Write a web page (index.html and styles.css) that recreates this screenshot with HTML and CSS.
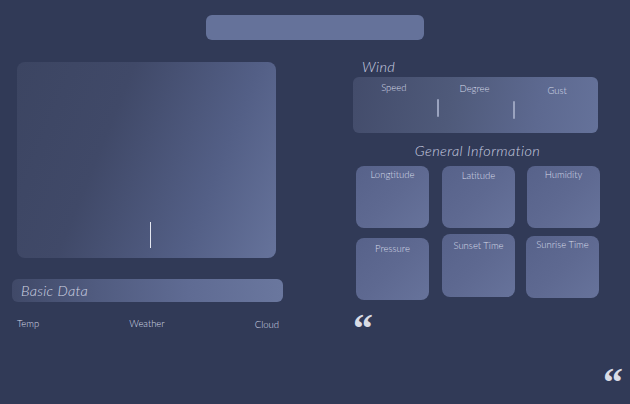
FILE: index.html
```html
<!DOCTYPE html>
<html>
<head>
<meta charset="utf-8">
<link rel="stylesheet" href="styles.css">
</head>
<body>
<div class="top-bar"></div>
<div class="main">
  <div class="left">
    <div class="map-card"><span class="caret"></span></div>
    <div class="basic-bar">Basic Data</div>
    <div class="basic-row">
      <span>Temp</span>
      <span>Weather</span>
      <span>Cloud</span>
    </div>
  </div>
  <div class="right">
    <div class="section-title wind-title">Wind</div>
    <div class="wind-card">
      <div class="wind-col"><span class="lbl l-speed">Speed</span></div>
      <span class="sep sep1"></span>
      <div class="wind-col"><span class="lbl l-degree">Degree</span></div>
      <span class="sep sep2"></span>
      <div class="wind-col"><span class="lbl l-gust">Gust</span></div>
    </div>
    <div class="section-title gen-title">General Information</div>
    <div class="grid">
      <div class="tile t1">Longtitude</div>
      <div class="tile t2">Latitude</div>
      <div class="tile t3">Humidity</div>
      <div class="tile t4">Pressure</div>
      <div class="tile t5">Sunset Time</div>
      <div class="tile t6">Sunrise Time</div>
    </div>
    <div class="quote q1">&ldquo;</div>
    <div class="quote q2">&ldquo;</div>
  </div>
</div>
</body>
</html>
```

FILE: styles.css
```css
* { box-sizing: border-box; }
html, body {
  margin: 0;
  padding: 0;
}
body {
  width: 630px;
  height: 404px;
  overflow: hidden;
  background: #313a57;
  font-family: Lato, "Open Sans", sans-serif;
  font-weight: 300;
  color: #d6dae8;
}
.top-bar {
  width: 218px;
  height: 25px;
  margin: 15px auto 0;
  background: #65729a;
  border-radius: 6px;
}
.main {
  display: flex;
  padding-left: 12px;
}
.left {
  width: 271px;
  display: flex;
  flex-direction: column;
}
.map-card {
  margin: 22px 0 0 5px;
  width: 259px;
  height: 196px;
  border-radius: 8px;
  background: linear-gradient(112deg, #3c4562 0%, #404968 35%, #535f86 72%, #66739b 100%);
  display: flex;
  justify-content: center;
  align-items: flex-end;
  padding-bottom: 10px;
  padding-left: 8px;
}
.caret {
  display: block;
  width: 1px;
  height: 26px;
  background: #e4e7f0;
}
.basic-bar {
  margin-top: 21px;
  height: 23px;
  border-radius: 6px;
  background: linear-gradient(90deg, #404968 0%, #505b7f 30%, #5f6b93 65%, #6a779e 100%);
  font-style: italic;
  font-size: 14.5px;
  line-height: 23px;
  padding-left: 9px;
  color: #cfd3e3;
  letter-spacing: 0.3px;
}
.basic-row {
  display: flex;
  justify-content: space-between;
  padding: 16px 4px 0 5px;
  font-size: 9.5px;
  color: #d6dae8;
}
.basic-row span:nth-child(3) { margin-top: 1px; }
.right {
  margin-left: 70px;
  width: 248px;
  display: flex;
  flex-direction: column;
}
.section-title {
  font-style: italic;
  font-size: 14.5px;
  letter-spacing: 0.4px;
  color: #c9cee0;
}
.wind-title {
  margin-top: 18px;
  padding-left: 9px;
  line-height: 17px;
}
.wind-card {
  margin-top: 2px;
  width: 245px;
  height: 56px;
  border-radius: 6px;
  background: linear-gradient(100deg, #434c6b 0%, #4f5a7a 40%, #5d6990 75%, #65729a 100%);
  display: flex;
  position: relative;
}
.wind-col {
  flex: 1;
  font-size: 9.5px;
  text-align: center;
  color: #d6dae8;
}
.lbl { display: block; }
.l-speed { margin-top: 5px; }
.l-degree { margin-top: 6px; margin-right: 2px; }
.l-gust { margin-top: 8px; margin-right: 0; }
.sep {
  position: absolute;
  width: 2px;
  height: 18px;
  border-radius: 1px;
  background: #9aa3bf;
}
.sep1 { left: 84px; top: 22px; }
.sep2 { left: 160px; top: 24px; }
.gen-title {
  margin-top: 9px;
  text-align: center;
  padding-left: 1px;
  line-height: 17px;
}
.grid {
  margin-top: 7px;
  padding-left: 3px;
  display: grid;
  grid-template-columns: 73px 73px 73px;
  column-gap: 13px;
  row-gap: 10px;
}
.tile {
  height: 62px;
  border-radius: 8px;
  background: linear-gradient(135deg, #57628a 0%, #5e6991 50%, #67739b 100%);
  font-size: 9.5px;
  text-align: center;
  padding-top: 3px;
  color: #d6dae8;
}
.t2 { padding-top: 4px; }
.t3 { margin-left: -1px; margin-right: 1px; }
.t4 { padding-top: 5px; }
.t5 { margin-top: -4px; height: 63px; padding-top: 6px; }
.t6 { margin-top: -2px; margin-left: -2px; margin-right: 2px; padding-top: 3px; }
.quote {
  font-family: "Liberation Serif", serif;
  font-weight: bold;
  font-size: 40px;
  line-height: 40px;
  height: 20px;
  color: #d9dce5;
}
.q1 { margin-top: 9px; padding-left: 0; }
.q2 { margin-top: 34px; text-align: right; margin-right: -22px; }
```
